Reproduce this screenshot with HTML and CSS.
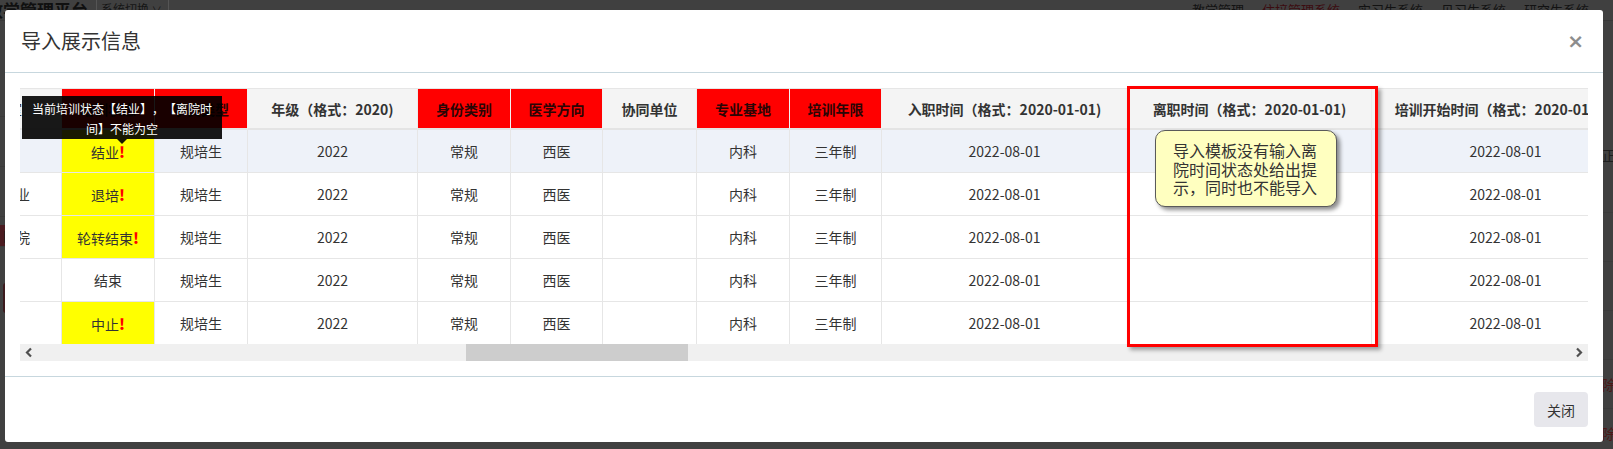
FILE: index.html
```html
<!DOCTYPE html>
<html lang="zh-CN">
<head>
<meta charset="utf-8">
<title>住培管理系统 - 导入展示信息</title>
<link rel="stylesheet" href="styles.css">
</head>
<body>
<div class="page">
  <header class="topbar">
    <div class="brand">教学管理平台</div>
    <div class="switch">系统切换 <span class="caret">∨</span></div>
    <nav class="sysnav">
      <span>教学管理</span>
      <span class="cur">住培管理系统</span>
      <span>实习生系统</span>
      <span>见习生系统</span>
      <span>研究生系统</span>
    </nav>
  </header>
  <div class="workspace">
    <aside class="sidebar">
      <div class="side-item"></div>
      <div class="side-item"></div>
      <div class="side-item"></div>
      <div class="side-item active">目录</div>
      <div class="side-btn"></div>
    </aside>
    <main class="content">
      <div class="ops-row"><span class="op">修正</span></div>
      <div class="ops-row"></div>
      <div class="ops-row"></div>
      <div class="ops-row"></div>
      <div class="ops-row"><span class="op del">删除</span></div>
      <div class="ops-row"><span class="op del">删除</span></div>
    </main>
  </div>
</div>

<div class="modal">
  <div class="modal-head">
    <h4 class="modal-title">导入展示信息</h4>
    <button class="close" type="button">×</button>
  </div>

  <div class="modal-body">
    <div class="grid-wrap">
      <table class="grid">
        <colgroup>
          <col class="w-cut"><col class="w-s"><col class="w-s"><col class="w-m">
          <col class="w-s"><col class="w-s2"><col class="w-s3"><col class="w-s">
          <col class="w-s2"><col class="w-l"><col class="w-l2"><col class="w-xl">
        </colgroup>
        <thead>
          <tr>
            <th class="cut">所在科室</th>
            <th class="req">培训状态</th>
            <th class="req">学员类型</th>
            <th>年级（格式：2020)</th>
            <th class="req">身份类别</th>
            <th class="req">医学方向</th>
            <th>协同单位</th>
            <th class="req">专业基地</th>
            <th class="req">培训年限</th>
            <th>入职时间（格式：2020-01-01)</th>
            <th>离职时间（格式：2020-01-01)</th>
            <th>培训开始时间（格式：2020-01-01)</th>
          </tr>
        </thead>
        <tbody>
          <tr class="hover">
            <td class="cut"></td>
            <td class="bad">结业<b class="warn">!</b></td>
            <td>规培生</td><td>2022</td><td>常规</td><td>西医</td><td></td>
            <td>内科</td><td>三年制</td><td>2022-08-01</td><td></td><td>2022-08-01</td>
          </tr>
          <tr>
            <td class="cut">已毕业</td>
            <td class="bad">退培<b class="warn">!</b></td>
            <td>规培生</td><td>2022</td><td>常规</td><td>西医</td><td></td>
            <td>内科</td><td>三年制</td><td>2022-08-01</td><td></td><td>2022-08-01</td>
          </tr>
          <tr>
            <td class="cut">第一医院</td>
            <td class="bad">轮转结束<b class="warn">!</b></td>
            <td>规培生</td><td>2022</td><td>常规</td><td>西医</td><td></td>
            <td>内科</td><td>三年制</td><td>2022-08-01</td><td></td><td>2022-08-01</td>
          </tr>
          <tr>
            <td class="cut"></td>
            <td>结束</td>
            <td>规培生</td><td>2022</td><td>常规</td><td>西医</td><td></td>
            <td>内科</td><td>三年制</td><td>2022-08-01</td><td></td><td>2022-08-01</td>
          </tr>
          <tr class="last">
            <td class="cut"></td>
            <td class="bad">中止<b class="warn">!</b></td>
            <td>规培生</td><td>2022</td><td>常规</td><td>西医</td><td></td>
            <td>内科</td><td>三年制</td><td>2022-08-01</td><td></td><td>2022-08-01</td>
          </tr>
        </tbody>
      </table>
    </div>

    <div class="hscroll">
      <span class="sb-btn">
        <svg width="17" height="17" viewBox="0 0 17 17"><polyline points="11,4.5 7,8.5 11,12.5" fill="none" stroke="#505050" stroke-width="2.2"/></svg>
      </span>
      <div class="sb-track"><div class="sb-thumb" style="margin-left:429px;width:222px"></div></div>
      <span class="sb-btn">
        <svg width="17" height="17" viewBox="0 0 17 17"><polyline points="6,4.5 10,8.5 6,12.5" fill="none" stroke="#505050" stroke-width="2.2"/></svg>
      </span>
    </div>

    <div class="tip">当前培训状态【结业】，【离院时间】不能为空</div>
    <div class="mark-box"></div>
    <div class="note">导入模板没有输入离院时间状态处给出提示，同时也不能导入</div>
  </div>

  <div class="modal-foot">
    <button class="btn" type="button">关闭</button>
  </div>
</div>
</body>
</html>
```

FILE: styles.css
```css
* { box-sizing: border-box; }

html, body { margin: 0; padding: 0; }

body {
  width: 1613px;
  height: 449px;
  overflow: hidden;
  position: relative;
  background: #404040;
  font-family: "Microsoft YaHei", "Noto Sans CJK SC", "Noto Sans", sans-serif;
  color: #333;
  text-spacing-trim: space-all;
}

/* ---------- dimmed page behind the dialog ---------- */
.page { width: 100%; height: 100%; display: flex; flex-direction: column; }

.topbar {
  height: 50px;
  display: flex;
  align-items: flex-start;
  border-bottom: 1px solid #383838;
}
.brand {
  font-size: 17px;
  font-weight: bold;
  line-height: 20px;
  color: #101010;
  margin-left: -14px;
  padding-right: 12px;
  width: 110px;
  white-space: nowrap;
}
.switch {
  border-left: 1px solid #555;
  border-right: 1px solid #555;
  height: 14px;
  padding: 0 6px 0 4px;
  font-size: 12px;
  line-height: 18px;
  color: #151515;
  white-space: nowrap;
}
.caret { font-size: 10px; }
.sysnav {
  margin-left: auto;
  display: flex;
  padding-right: 15px;
  font-size: 13px;
  line-height: 20px;
  color: #121212;
}
.sysnav span { padding: 0 9px; }
.sysnav .cur { color: #3c0c10; }

.workspace { flex: 1; display: flex; }
.sidebar { width: 180px; display: flex; flex-direction: column; padding-top: 46px; }
.side-item {
  height: 50px;
  border-bottom: 1px solid #3a3a3a;
  font-size: 13px;
  line-height: 22px;
  color: #1c1c1c;
}
.side-item.active { height: 22px; background: #4a1b20; padding-left: 2px; margin-top: 8px; }
.side-btn { margin: 36px 0 0 3px; width: 60px; height: 30px; border-radius: 3px; background: #3d1a1d; }

.content { flex: 1; display: flex; flex-direction: column; align-items: flex-end; padding-top: 62px; }
.ops-row {
  height: 49px;
  width: 100%;
  border-bottom: 1px solid #3b3b3b;
  display: flex;
  align-items: center;
  justify-content: flex-end;
  font-size: 14px;
  margin-right: -3px;
}
.ops-row:first-child { height: 130px; align-items: flex-start; padding-top: 62px; }
.op { color: #1e1e1e; }
.op.del { color: #4d1717; }

/* ---------- dialog ---------- */
.modal {
  position: absolute;
  top: 10px;
  left: 5px;
  width: 1598px;
  background: #fff;
  border-radius: 3px;
}

.modal-head {
  height: 63px;
  border-bottom: 1px solid #c7d7de;
  display: flex;
  align-items: center;
  justify-content: space-between;
  padding: 0 15px 0 16px;
}
.modal-title {
  margin: 0;
  font-size: 20px;
  font-weight: normal;
  color: #333;
  line-height: 24px;
}
.close {
  border: 0;
  background: none;
  padding: 0;
  font-family: "DejaVu Sans", sans-serif;
  font-size: 20px;
  font-weight: bold;
  line-height: 20px;
  color: #8d8d8d;
  margin-right: 4px;
}

.modal-body { position: relative; padding: 15px; }

.grid-wrap { width: 1568px; overflow: hidden; }

.grid {
  width: 1620px;
  table-layout: fixed;
  border-collapse: separate;
  border-spacing: 0;
  font-size: 14px;
  color: #333;
}
.w-cut { width: 42px; }
.w-s { width: 93px; }
.w-s2 { width: 92px; }
.w-s3 { width: 94px; }
.w-m { width: 170px; }
.w-l { width: 246px; }
.w-l2 { width: 244px; }
.w-xl { width: 268px; }

.grid th,
.grid td {
  padding: 0;
  text-align: center;
  vertical-align: middle;
  white-space: nowrap;
  overflow: hidden;
  border-right: 1px solid #e6e6e6;
}
.grid th {
  height: 42px;
  background: #f4f4f4;
  font-weight: bold;
  border-top: 1px solid #e6e6e6;
  border-bottom: 2px solid #e4e4e4;
  border-right-color: #ececec;
}
.grid th.req { background: #ff0000; color: #2a0505; border-right-color: #f2f2f2; }
.grid td {
  height: 43px;
  border-bottom: 1px solid #e6e6e6;
  background: #fff;
}
.grid tr.last td { height: 42px; border-bottom: 0; }
.grid tr.hover td { background: #eef2f9; }
.grid td.bad,
.grid tr.hover td.bad { background: #ffff00; }
.warn { color: #ff0000; font-weight: 900; font-size: 15px; }

/* column scrolled partly out of view: text clipped from the left */
.grid .cut {
  direction: rtl;
  text-align: right;
  padding-right: 32px;
  font-weight: normal;
}
.grid th.cut { padding-right: 40px; }

/* horizontal scrollbar */
.hscroll { display: flex; height: 17px; background: #f0f0f0; }
.sb-btn { width: 17px; height: 17px; flex: none; display: flex; }
.sb-track { flex: 1; display: flex; }
.sb-thumb { height: 17px; background: #cdcdcd; }

/* tooltip over the status column */
.tip {
  position: absolute;
  left: 17px;
  top: 23px;
  width: 200px;
  padding: 3px 5px 0;
  background: rgba(0, 0, 0, 0.9);
  color: #fff;
  font-size: 12px;
  line-height: 20px;
  text-align: center;
}
.tip::after {
  content: "";
  position: absolute;
  left: 95px;
  bottom: -5px;
  border-left: 5px solid transparent;
  border-right: 5px solid transparent;
  border-top: 5px solid rgba(0, 0, 0, 0.9);
}

/* annotation frame and callout */
.mark-box {
  position: absolute;
  left: 1122px;
  top: 13px;
  width: 251px;
  height: 261px;
  border: 3px solid #ff0000;
  box-shadow: 3px 3px 4px rgba(0, 0, 0, 0.35);
}
.note {
  position: absolute;
  left: 1150px;
  top: 57px;
  width: 182px;
  height: 77px;
  padding: 10px 17px 0;
  background: #ffffc0;
  border: 1px solid #5a5a5a;
  border-radius: 10px;
  box-shadow: 3px 3px 4px rgba(0, 0, 0, 0.45);
  font-size: 16px;
  line-height: 18.5px;
  color: #333;
}

.modal-foot {
  border-top: 1px solid #c7d7de;
  padding: 15px;
  display: flex;
  justify-content: flex-end;
}
.btn {
  height: 35px;
  padding: 0 13px;
  border: 0;
  border-radius: 4px;
  background: #e7e7ec;
  color: #333;
  font-family: inherit;
  font-size: 14px;
}
```
